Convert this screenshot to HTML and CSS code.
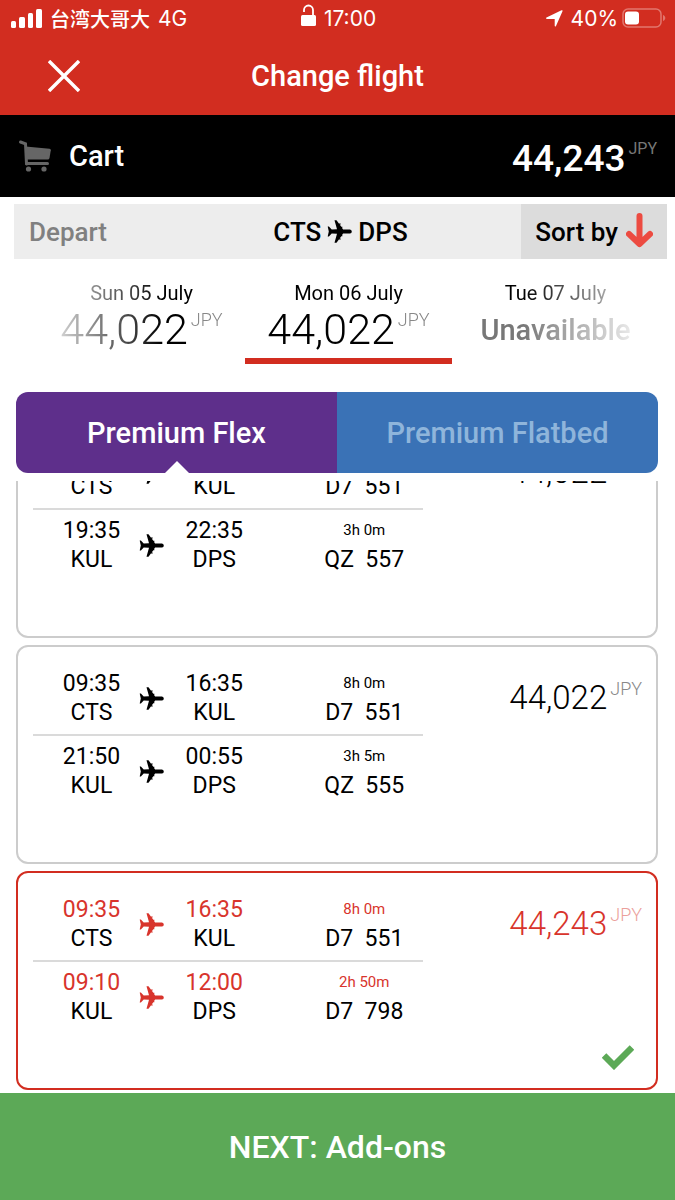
FILE: index.html
```html
<!DOCTYPE html>
<html lang="en">
<head>
    <meta charset="UTF-8">
    <meta name="viewport" content="width=device-width, initial-scale=1.0">
    <title>Change flight</title>
    <link rel="stylesheet" href="styles.css">
</head>
<body>
    <svg class="defs" aria-hidden="true">
        <symbol id="plane" viewBox="0 0 25 23">
            <path d="M.7 6.500h1.200l2.800 2.900 5.300-.2L7.500.3h2l2.400 3.100h1.800v1h-1l1.600 2.400h1.100v1h-.5l1.200 1.600h6.900q1.800.3 1.800 2.100t-1.800 2.100h-6.900l-1.200 1.600h.5v1h-1.100l-1.600 2.400h1v1h-1.800l-2.400 3.100h-2L10 13.800l-5.300-.2-2.800 2.900H.7l1.100-5z"/>
        </symbol>
    </svg>

    <header class="header">
        <div class="status">
            <div class="status-side">
                <svg width="31" height="20" viewBox="0 0 31 20" fill="#fff">
                    <rect x="0" y="13" width="5" height="7" rx="1.500"/>
                    <rect x="8" y="9" width="6" height="11" rx="1.500"/>
                    <rect x="17" y="5" width="5" height="15" rx="1.500"/>
                    <rect x="25" y="1" width="6" height="19" rx="1.500"/>
                </svg>
                <span class="carrier">台湾大哥大</span>
                <span>4G</span>
            </div>
            <div class="status-mid">
                <svg width="15" height="22" viewBox="0 0 15 22">
                    <rect x="0" y="11" width="15" height="11" rx="1.500" fill="#fff"/>
                    <path d="M3 8V6a4.500 4.500 0 0 1 9 0v6" fill="none" stroke="#fff" stroke-width="1.800"/>
                </svg>
                <span>17:00</span>
            </div>
            <div class="status-side status-right">
                <svg width="17" height="17" viewBox="0 0 17 17" fill="#fff"><path d="M.5 7.500 15.500.3c.9-.4 1.400.1 1 1L10 16c-.4.9-1.300.7-1.300-.2V9H1c-1 0-1.300-1-.5-1.500z"/></svg>
                <span>40%</span>
                <svg class="battery" width="44" height="20" viewBox="0 0 44 20">
                    <rect x="1" y="1" width="38" height="18" rx="5" fill="none" stroke="#fff" stroke-opacity=".35" stroke-width="1.500"/>
                    <rect x="3" y="3.500" width="14" height="13" rx="3" fill="#fff"/>
                    <path d="M41 7c3 1 3 5 0 6z" fill="#fff" fill-opacity=".35"/>
                </svg>
            </div>
        </div>
        <div class="title-bar">
            <button class="close" aria-label="Close">
                <svg width="32" height="32" viewBox="0 0 32 32"><path d="M1 1l30 30M31 1L1 31" stroke="#fff" stroke-width="3.400"/></svg>
            </button>
            <h1>Change flight</h1>
        </div>
    </header>

    <div class="cart">
        <svg width="33" height="32" viewBox="0 0 33 32" fill="#666">
            <path d="M2.500 2l5 1.800 1 20.200" fill="none" stroke="#666" stroke-width="3" stroke-linecap="round"/>
            <path d="M7.500 6.500l24 2.300q1.500.2 1.300 1.500L31.500 18q-.3 1.500-2 1.500H8z"/>
            <rect x="7" y="22" width="24" height="3" rx="1.500"/>
            <circle cx="10.500" cy="29" r="2.600"/><circle cx="26" cy="29" r="2.600"/>
        </svg>
        <span class="cart-label">Cart</span>
        <span class="price price-total">44,243<span class="currency">JPY</span></span>
    </div>

    <div class="route">
        <span class="direction">Depart</span>
        <span class="airports">CTS <svg class="plane"><use href="#plane"/></svg> DPS</span>
        <button class="sort">Sort by
            <svg width="27" height="38" viewBox="0 0 27 38"><path d="M13.500 3v27M3 21l10.500 10L24 21" fill="none" stroke="#ec4b41" stroke-width="6" stroke-linecap="round" stroke-linejoin="round"/></svg>
        </button>
    </div>

    <div class="dates">
        <button class="date">
            <span>Sun 05 July</span>
            <span class="price">44,022<span class="currency">JPY</span></span>
        </button>
        <button class="date selected">
            <span>Mon 06 July</span>
            <span class="price">44,022<span class="currency">JPY</span></span>
        </button>
        <button class="date">
            <span>Tue 07 July</span>
            <span class="unavailable">Unavailable</span>
        </button>
    </div>

    <div class="tabs">
        <button class="tab flex-tab">Premium Flex</button>
        <button class="tab flatbed-tab">Premium Flatbed</button>
    </div>

    <main class="flights">
        <button class="flight">
            <span class="legs">
                <span class="leg">
                    <span class="stop"><span class="accent">09:35</span><span>CTS</span></span>
                    <svg class="plane"><use href="#plane"/></svg>
                    <span class="stop"><span class="accent">16:35</span><span>KUL</span></span>
                    <span class="stop number"><span class="duration accent">8h 0m</span><span>D7&nbsp; 551</span></span>
                </span>
                <span class="leg">
                    <span class="stop"><span class="accent">19:35</span><span>KUL</span></span>
                    <svg class="plane"><use href="#plane"/></svg>
                    <span class="stop"><span class="accent">22:35</span><span>DPS</span></span>
                    <span class="stop number"><span class="duration accent">3h 0m</span><span>QZ&nbsp; 557</span></span>
                </span>
            </span>
            <span class="price fare">44,022<span class="currency">JPY</span></span>
        </button>

        <button class="flight">
            <span class="legs">
                <span class="leg">
                    <span class="stop"><span class="accent">09:35</span><span>CTS</span></span>
                    <svg class="plane"><use href="#plane"/></svg>
                    <span class="stop"><span class="accent">16:35</span><span>KUL</span></span>
                    <span class="stop number"><span class="duration accent">8h 0m</span><span>D7&nbsp; 551</span></span>
                </span>
                <span class="leg">
                    <span class="stop"><span class="accent">21:50</span><span>KUL</span></span>
                    <svg class="plane"><use href="#plane"/></svg>
                    <span class="stop"><span class="accent">00:55</span><span>DPS</span></span>
                    <span class="stop number"><span class="duration accent">3h 5m</span><span>QZ&nbsp; 555</span></span>
                </span>
            </span>
            <span class="price fare">44,022<span class="currency">JPY</span></span>
        </button>

        <button class="flight chosen" aria-pressed="true">
            <span class="legs">
                <span class="leg">
                    <span class="stop"><span class="accent">09:35</span><span>CTS</span></span>
                    <svg class="plane"><use href="#plane"/></svg>
                    <span class="stop"><span class="accent">16:35</span><span>KUL</span></span>
                    <span class="stop number"><span class="duration accent">8h 0m</span><span>D7&nbsp; 551</span></span>
                </span>
                <span class="leg">
                    <span class="stop"><span class="accent">09:10</span><span>KUL</span></span>
                    <svg class="plane"><use href="#plane"/></svg>
                    <span class="stop"><span class="accent">12:00</span><span>DPS</span></span>
                    <span class="stop number"><span class="duration accent">2h 50m</span><span>D7&nbsp; 798</span></span>
                </span>
            </span>
            <span class="price fare">44,243<span class="currency">JPY</span></span>
            <svg class="check" width="32" height="25" viewBox="0 0 32 25"><path d="M2 10.500l10 10L30 2.500" fill="none" stroke="#5ca957" stroke-width="6.500"/></svg>
        </button>
    </main>

    <button class="next">NEXT: Add-ons</button>
</body>
</html>
```

FILE: styles.css
```css
* {
    box-sizing: border-box;
}
body {
    display: flex;
    flex-direction: column;
    height: 100vh;
    margin: 0;
    background-color: #fff;
    color: #000;
    font-family: Roboto, "Noto Sans CJK TC", sans-serif;
}
button {
    margin: 0;
    padding: 0;
    border: 0;
    background: none;
    color: inherit;
    font: inherit;
}
svg {
    flex: none;
}
.defs {
    position: absolute;
    width: 0;
    height: 0;
}
.plane {
    width: 25px;
    height: 23px;
}

/* status bar and title */
.header {
    background-color: #d22d20;
    color: #fff;
}
.status {
    display: flex;
    align-items: center;
    height: 36px;
    padding: 0 9px 0 11px;
    font-family: Inter, "Noto Sans CJK TC", sans-serif;
    font-size: 21px;
}
.status-side {
    display: flex;
    flex: 1;
    align-items: center;
    gap: 8px;
}
.status-mid {
    display: flex;
    align-items: center;
    gap: 8px;
}
.status-mid svg {
    margin-bottom: 6px;
}
.status-right {
    justify-content: flex-end;
}
.carrier {
    font-size: 20px;
    font-weight: 500;
}
.battery {
    margin-left: -4px;
}
.title-bar {
    display: grid;
    grid-template-columns: 1fr auto 1fr;
    align-items: center;
    height: 79px;
    padding-left: 48px;
    padding-right: 48px;
}
.close {
    display: flex;
    justify-self: start;
}
h1 {
    margin: 0;
    font-size: 29px;
    font-weight: 500;
}

/* prices */
.price {
    display: flex;
    font-size: 43px;
    font-weight: 300;
    line-height: 40px;
}
.currency {
    margin-left: 3px;
    color: #888;
    font-size: 18px;
    line-height: 22px;
}

.cart {
    display: flex;
    align-items: center;
    height: 82px;
    padding: 0 18px;
    background-color: #000;
    color: #fff;
}
.cart-label {
    margin-left: 18px;
    font-size: 29px;
    font-weight: 500;
}
.price-total {
    margin-left: auto;
    padding-top: 6px;
    font-size: 37px;
    font-weight: 500;
}
.price-total .currency {
    color: #777;
    font-size: 16px;
    font-weight: 400;
    line-height: 20px;
}

.route {
    display: grid;
    grid-template-columns: 1fr auto 1fr;
    align-items: center;
    height: 55px;
    margin: 7px 8px 0 14px;
    background-color: #ededed;
    font-size: 26px;
    font-weight: 500;
}
.direction {
    padding-left: 15px;
    color: #808080;
}
.airports {
    display: flex;
    align-items: center;
    gap: 6px;
}
.sort {
    display: flex;
    align-items: center;
    justify-self: end;
    gap: 8px;
    height: 100%;
    padding: 0 14px;
    background-color: #dcdcdc;
}

/* date strip, fades out on both sides */
.dates {
    display: grid;
    grid-template-columns: 1fr 1fr 1fr;
    margin: 0 16px 28px 38px;
    -webkit-mask-image: linear-gradient(to right, transparent, #000 20%, #000 78%, transparent 99%);
    mask-image: linear-gradient(to right, transparent, #000 20%, #000 78%, transparent 99%);
}
.date {
    display: flex;
    flex-direction: column;
    align-items: center;
    gap: 4px;
    padding: 22px 0 7px;
    border-bottom: 6px solid transparent;
    font-size: 20px;
    line-height: 24px;
}
.selected {
    border-color: #d22d20;
}
.unavailable {
    color: #777;
    font-size: 29px;
    font-weight: 500;
    line-height: 42px;
}

.tabs {
    display: flex;
    margin: 0 17px 8px 16px;
}
.tab {
    position: relative;
    flex: 1;
    height: 81px;
    font-size: 29px;
    font-weight: 500;
}
.flex-tab {
    border-radius: 12px 0 0 12px;
    background-color: #5e2f8b;
    color: #fff;
}
.flex-tab::after {
    content: "";
    position: absolute;
    bottom: 0;
    left: 50%;
    margin-left: -12px;
    border: 12px solid transparent;
    border-top: 0;
    border-bottom-color: #fff;
}
.flatbed-tab {
    border-radius: 0 12px 12px 0;
    background-color: #3a72b6;
    color: #8fb5db;
}

/* list is scrolled to its end */
.flights {
    display: flex;
    flex: 1;
    flex-direction: column;
    justify-content: flex-end;
    gap: 7px;
    min-height: 0;
    padding: 0 17px 3px 16px;
    overflow: hidden;
}
.flight {
    position: relative;
    display: flex;
    flex: none;
    align-items: flex-start;
    justify-content: space-between;
    height: 219px;
    padding: 22px 14px 0 15px;
    border: 2px solid #ccc;
    border-radius: 12px;
    font-size: 23px;
    line-height: 29px;
}
.legs {
    width: 64%;
}
.leg {
    display: grid;
    grid-template-columns: 30% 1% 31% 8% 30%;
    align-items: center;
    justify-items: center;
}
.leg + .leg {
    margin-top: 7px;
    padding-top: 6px;
    border-top: 2px solid #dadada;
}
.stop {
    display: flex;
    flex-direction: column;
    align-items: center;
    white-space: nowrap;
}
.number {
    grid-column: 5;
}
.duration {
    font-size: 15px;
}
.fare {
    margin-top: 12px;
    font-size: 33px;
    line-height: 34px;
}
.fare .currency {
    line-height: 16px;
}
.chosen {
    border-color: #d22d20;
}
.chosen .accent,
.chosen .fare,
.chosen .plane {
    color: #d8342c;
    fill: #d8342c;
}
.chosen .currency {
    color: #eba09b;
}
.check {
    position: absolute;
    right: 22px;
    bottom: 18px;
}

.next {
    flex: none;
    height: 107px;
    background-color: #5ca957;
    color: #fff;
    font-size: 32px;
    font-weight: 500;
}
```
